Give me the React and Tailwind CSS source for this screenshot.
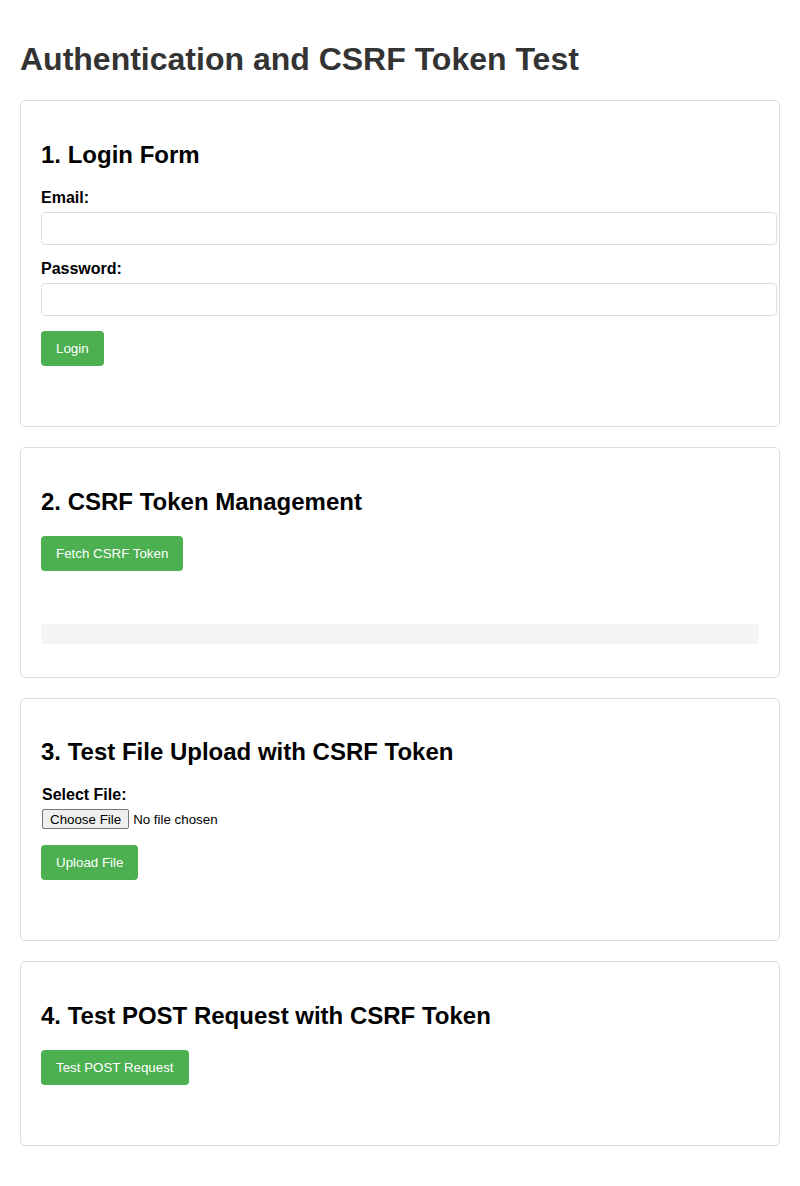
export default function App() {
  const btn =
    "bg-[#4CAF50] text-white px-[15px] py-[10px] rounded-[4px] text-[13.33px] leading-[normal] cursor-pointer";
  const card = "border border-[#ddd] rounded-[5px] p-5 mb-5";
  const h2 = "text-[24px] font-bold my-[19.92px] leading-[normal] text-black";
  const label = "block font-bold text-[16px] leading-[normal] mb-[5px] text-black";
  const input =
    "block box-content w-full h-[15px] p-2 border border-[#ddd] rounded-[4px] text-[13.33px] leading-[15px] bg-white";
  return (
    <div className="p-5 font-['Liberation_Sans',Arial,sans-serif] leading-[normal] text-black bg-white">
      <h1 className="text-[32px] font-bold text-[#333] my-[21.44px] leading-[normal]">
        Authentication and CSRF Token Test
      </h1>

      <div className={card}>
        <h2 className={h2}>1. Login Form</h2>
        <div className="mb-[15px]">
          <label className={label}>Email:</label>
          <input type="email" className={input} />
        </div>
        <div className="mb-[15px]">
          <label className={label}>Password:</label>
          <input type="password" className={input} />
        </div>
        <button className={btn}>Login</button>
        <div className="mt-5 h-5" />
      </div>

      <div className={card}>
        <h2 className={h2}>2. CSRF Token Management</h2>
        <button className={btn}>Fetch CSRF Token</button>
        <div className="mt-5 h-5" />
        <div className="my-[13px] h-5 bg-[#f4f4f4] rounded-[4px]" />
      </div>

      <div className={card}>
        <h2 className={h2}>3. Test File Upload with CSRF Token</h2>
        <div className="mb-[15px] pl-px">
          <label className={label}>Select File:</label>
          <input
            type="file"
            className="block h-[21px] text-[13.33px] leading-[normal] text-black file:mr-[4px] file:h-[20px] file:border file:border-solid file:border-[#767676] file:bg-[#efefef] file:rounded-[2px] file:px-[7px] file:py-[1px] file:text-black"
          />
        </div>
        <button className={btn}>Upload File</button>
        <div className="mt-5 h-5" />
      </div>

      <div className={card}>
        <h2 className={h2}>4. Test POST Request with CSRF Token</h2>
        <button className={btn}>Test POST Request</button>
        <div className="mt-5 h-5" />
      </div>
    </div>
  );
}
